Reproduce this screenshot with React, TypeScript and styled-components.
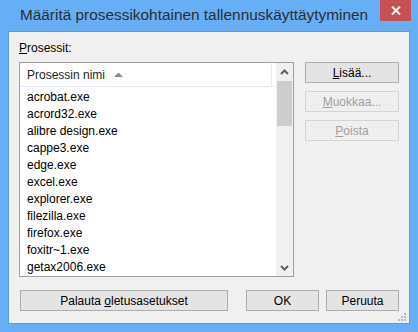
import React from "react";
import styled, { createGlobalStyle } from "styled-components";

const Global = createGlobalStyle`
  html, body { margin: 0; padding: 0; background: #66aef5; }
  body { font-family: "Liberation Sans", Arial, sans-serif; }
  * { box-sizing: border-box; }
`;

const Frame = styled.div`
  width: 418px;
  height: 332px;
  background: #66aef5;
  display: flex;
  flex-direction: column;
  padding: 0 8px 8px 8px;
`;

const TitleBar = styled.div`
  height: 31px;
  display: flex;
  align-items: flex-start;
  margin-right: -8px;
`;

const Title = styled.div`
  flex: 1;
  text-align: center;
  font-family: "Liberation Sans", Arial, sans-serif;
  font-size: 15.4px;
  line-height: 30px;
  color: #2e2e2e;
  white-space: nowrap;
`;

const CloseBtn = styled.div`
  width: 31px;
  height: 21px;
  margin-right: 7px;
  background: #c75050;
  display: flex;
  align-items: center;
  justify-content: center;
`;

const Client = styled.div`
  position: relative;
  flex: 1;
  background: #f0f0f0;
  border: 1px solid #5b9be0;
  padding: 9px 10px 0 10px;
  display: flex;
  flex-direction: column;
  font-family: "Liberation Sans", Arial, sans-serif;
  font-size: 12px;
  color: #000;
`;

const Label = styled.div`
  height: 21px;
  line-height: 15px;
`;

const U = styled.span`
  text-decoration: underline;
  text-underline-offset: 1px;
`;

const Main = styled.div`
  display: flex;
  gap: 11px;
  align-items: flex-start;
`;

const ListBox = styled.div`
  width: 275px;
  height: 215px;
  border: 1px solid #a0a0a0;
  background: #fff;
  display: flex;
  overflow: hidden;
`;

const ListContent = styled.div`
  flex: 1;
  display: flex;
  flex-direction: column;
`;

const Header = styled.div`
  height: 24px;
  display: flex;
  border-bottom: 1px solid #e3eaf5;
  margin-bottom: 2px;
`;

const HeaderCell = styled.div`
  width: 252px;
  border-right: 1px solid #e3eaf5;
  display: flex;
  align-items: center;
  padding-left: 7px;
  gap: 9px;
  color: #1e1e1e;
`;

const Row = styled.div`
  height: 17px;
  line-height: 17px;
  padding-left: 7px;
  white-space: nowrap;
`;

const ScrollBar = styled.div`
  width: 17px;
  background: #f0f0f0;
  display: flex;
  flex-direction: column;
`;

const ScrollArrow = styled.div`
  height: 17px;
  display: flex;
  align-items: center;
  justify-content: center;
`;

const Thumb = styled.div`
  height: 45px;
  margin: 1px 1px 0 1px;
  background: #cdcdcd;
`;

const Track = styled.div`
  flex: 1;
`;

const SideButtons = styled.div`
  display: flex;
  flex-direction: column;
  gap: 8px;
`;

const Button = styled.div<{ $w: number; $disabled?: boolean }>`
  width: ${(p) => p.$w}px;
  height: 21px;
  display: flex;
  align-items: center;
  justify-content: center;
  border: 1px solid ${(p) => (p.$disabled ? "#d5d5d5" : "#adadad")};
  background: ${(p) => (p.$disabled ? "#efefef" : "#e4e4e4")};
  color: ${(p) => (p.$disabled ? "#a0a0a0" : "#000")};
  white-space: nowrap;
`;

const Footer = styled.div`
  display: flex;
  margin-top: 13px;
  padding-left: 1px;
`;

const Spacer = styled.div`
  width: 18px;
`;

const Gap = styled.div`
  width: 7px;
`;

const Grip = styled.div`
  position: absolute;
  right: 2px;
  bottom: 1px;
  width: 9px;
  height: 9px;
  display: grid;
  grid-template-columns: repeat(3, 2px);
  grid-template-rows: repeat(3, 2px);
  gap: 1px;
`;

const Dot = styled.div<{ $on: boolean }>`
  background: ${(p) => (p.$on ? "#b9b9b9" : "transparent")};
`;

const items = [
  "acrobat.exe",
  "acrord32.exe",
  "alibre design.exe",
  "cappe3.exe",
  "edge.exe",
  "excel.exe",
  "explorer.exe",
  "filezilla.exe",
  "firefox.exe",
  "foxitr~1.exe",
  "getax2006.exe",
];

const gripMap = [0, 0, 1, 0, 1, 1, 1, 1, 1];

export default function App() {
  return (
    <>
      <Global />
      <Frame>
        <TitleBar>
          <Title>Määritä prosessikohtainen tallennuskäyttäytyminen</Title>
          <CloseBtn>
            <svg width="10" height="9" viewBox="0 0 10 9">
              <path d="M1 0.5 L9 8.5 M9 0.5 L1 8.5" stroke="#fff" strokeWidth="2" />
            </svg>
          </CloseBtn>
        </TitleBar>
        <Client>
          <Label>
            <U>P</U>rosessit:
          </Label>
          <Main>
            <ListBox>
              <ListContent>
                <Header>
                  <HeaderCell>
                    Prosessin nimi
                    <svg width="9" height="5" viewBox="0 0 9 5">
                      <path d="M0 5 L4.5 0.5 L9 5 Z" fill="#8a8a8a" />
                    </svg>
                  </HeaderCell>
                </Header>
                {items.map((t) => (
                  <Row key={t}>{t}</Row>
                ))}
              </ListContent>
              <ScrollBar>
                <ScrollArrow>
                  <svg width="9" height="6" viewBox="0 0 9 6">
                    <path d="M1 5 L4.5 1.5 L8 5" stroke="#606060" strokeWidth="2" fill="none" />
                  </svg>
                </ScrollArrow>
                <Thumb />
                <Track />
                <ScrollArrow>
                  <svg width="9" height="6" viewBox="0 0 9 6">
                    <path d="M1 1 L4.5 4.5 L8 1" stroke="#606060" strokeWidth="2" fill="none" />
                  </svg>
                </ScrollArrow>
              </ScrollBar>
            </ListBox>
            <SideButtons>
              <Button $w={94}>
                <span>
                  <U>L</U>isää...
                </span>
              </Button>
              <Button $w={94} $disabled>
                <span>
                  <U>M</U>uokkaa...
                </span>
              </Button>
              <Button $w={94} $disabled>
                <span>
                  <U>P</U>oista
                </span>
              </Button>
            </SideButtons>
          </Main>
          <Footer>
            <Button $w={208}>
              <span>
                Palauta <U>o</U>letusasetukset
              </span>
            </Button>
            <Spacer />
            <Button $w={73}>OK</Button>
            <Gap />
            <Button $w={73}>Peruuta</Button>
          </Footer>
          <Grip>
            {gripMap.map((v, i) => (
              <Dot key={i} $on={v === 1} />
            ))}
          </Grip>
        </Client>
      </Frame>
    </>
  );
}
